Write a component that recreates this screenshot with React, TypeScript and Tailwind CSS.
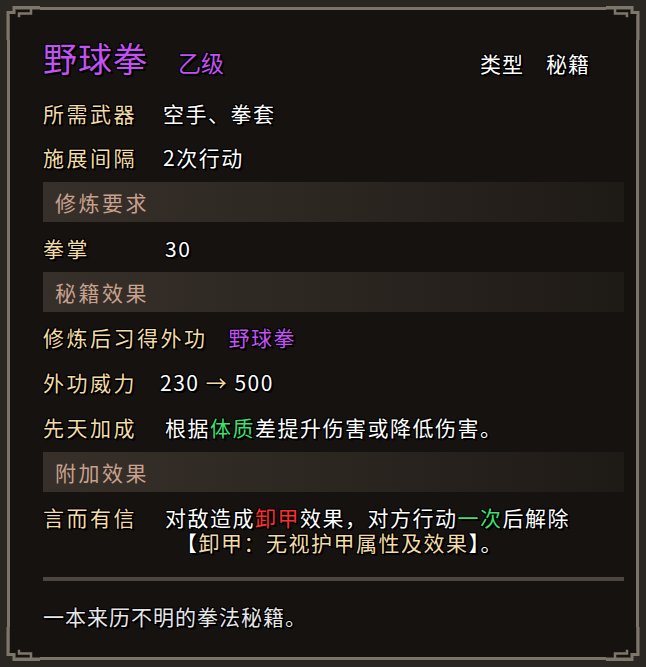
import React from "react";

const font = "font-['Noto_Sans_CJK_SC','Noto_Sans',sans-serif]";
const outline =
  "[text-shadow:1px_0_0_#000,-1px_0_0_#000,0_1px_0_#000,0_-1px_0_#000,1px_1px_0_#000,-1px_-1px_0_#000,1px_-1px_0_#000,-1px_1px_0_#000,2px_2px_0_#000]";

const Corner = ({ className }: { className: string }) => (
  <svg
    className={"absolute w-[40px] h-[40px] " + className}
    viewBox="0 0 40 40"
    fill="none"
  >
    <rect x="0" y="0" width="16" height="16" fill="#2a2723" />
    <polygon points="9.5,40 9.5,14 15.5,14 15.5,9.5 40,9.5 40,40" fill="#16120f" />
    <path
      d="M40 7.5H14V12.5H8V40"
      stroke="#7d776b"
      strokeWidth="3"
      strokeLinecap="square"
    />
    <path
      d="M31 8V13.5H19V16"
      stroke="#7d776b"
      strokeWidth="2.5"
      strokeLinecap="square"
    />
  </svg>
);

const Row = ({
  label,
  children,
  labelClass = "w-[120px]",
  className = "h-[44px]",
}: {
  label: string;
  children: React.ReactNode;
  labelClass?: string;
  className?: string;
}) => (
  <div className={"flex items-center " + className}>
    <div className={"shrink-0 text-[#f3dba6] tracking-[2.5px] " + labelClass}>{label}</div>
    <div className="text-white tracking-[1.5px]">{children}</div>
  </div>
);

const Bar = ({ title, className }: { title: string; className: string }) => (
  <div
    className={
      "h-[40px] flex items-center pl-[12px] bg-linear-to-r from-[#37302a] via-[#2c2621] to-[#1e1a16] text-[#c8a18e] tracking-[2.5px] [text-shadow:none] " +
      className
    }
  >
    {title}
  </div>
);

export default function App() {
  return (
    <div className={"w-[646px] h-[667px] bg-[#2a2723] p-[7px] relative " + font}>
      <div className="h-full border-[3px] border-[#7b7569] bg-[#16120f] pl-[33px] pr-[12px] pt-[31px]">
        <div className={"flex flex-col text-[21px] leading-none " + outline}>
          <div className="flex items-baseline h-[50px]">
            <span className="text-[34px] text-[#c252f2] tracking-[1px]">野球拳</span>
            <span className="ml-[30px] text-[23px] text-[#c252f2]">乙级</span>
            <span className="ml-auto mr-[34px] text-white tracking-[1px]">
              类型<span className="ml-[22px]">秘籍</span>
            </span>
          </div>
          <Row label="所需武器">空手、拳套</Row>
          <Row label="施展间隔">2次行动</Row>
          <Bar title="修炼要求" className="mt-[3px]" />
          <Row label="拳掌" className="h-[44px] mt-[4px]">
            <span className="ml-[2px]">30</span>
          </Row>
          <Bar title="秘籍效果" className="mt-[2px]" />
          <Row label="修炼后习得外功" labelClass="mr-[21px]" className="h-[44px] mt-[3px]">
            <span className="text-[#c252f2]">野球拳</span>
          </Row>
          <Row label="外功威力" className="h-[46px]">
            <span className="-ml-[3px]">
              230 <span className="text-[#f5dca0]">→</span> 500
            </span>
          </Row>
          <Row label="先天加成" className="h-[45px]">
            <span className="ml-[2px]">
              根据<span className="text-[#3ee072]">体质</span>差提升伤害或降低伤害。
            </span>
          </Row>
          <Bar title="附加效果" className="mt-[2px]" />
          <div className="flex items-start mt-[13px] leading-[25px]">
            <div className="w-[120px] shrink-0 text-[#f3dba6] tracking-[2.5px]">言而有信</div>
            <div className="ml-[2px] text-white tracking-[1.5px]">
              <div>
                对敌造成<span className="text-[#ff2e2e]">卸甲</span>效果，对方行动
                <span className="text-[#3ee072]">一次</span>后解除
              </div>
              <div className="ml-[11px]">
                【<span className="text-[#f3dba6]">卸甲：无视护甲属性及效果</span>】。
              </div>
            </div>
          </div>
          <div className="mt-[22px] h-[4px] bg-[#4c463e]" />
          <div className="mt-[23px] leading-[24px] text-[#e6e6e6] tracking-[1px]">
            一本来历不明的拳法秘籍。
          </div>
        </div>
      </div>
      <Corner className="top-0 left-0" />
      <Corner className="top-0 right-0 -scale-x-100" />
      <Corner className="bottom-0 left-0 -scale-y-100" />
      <Corner className="bottom-0 right-0 rotate-180" />
    </div>
  );
}
